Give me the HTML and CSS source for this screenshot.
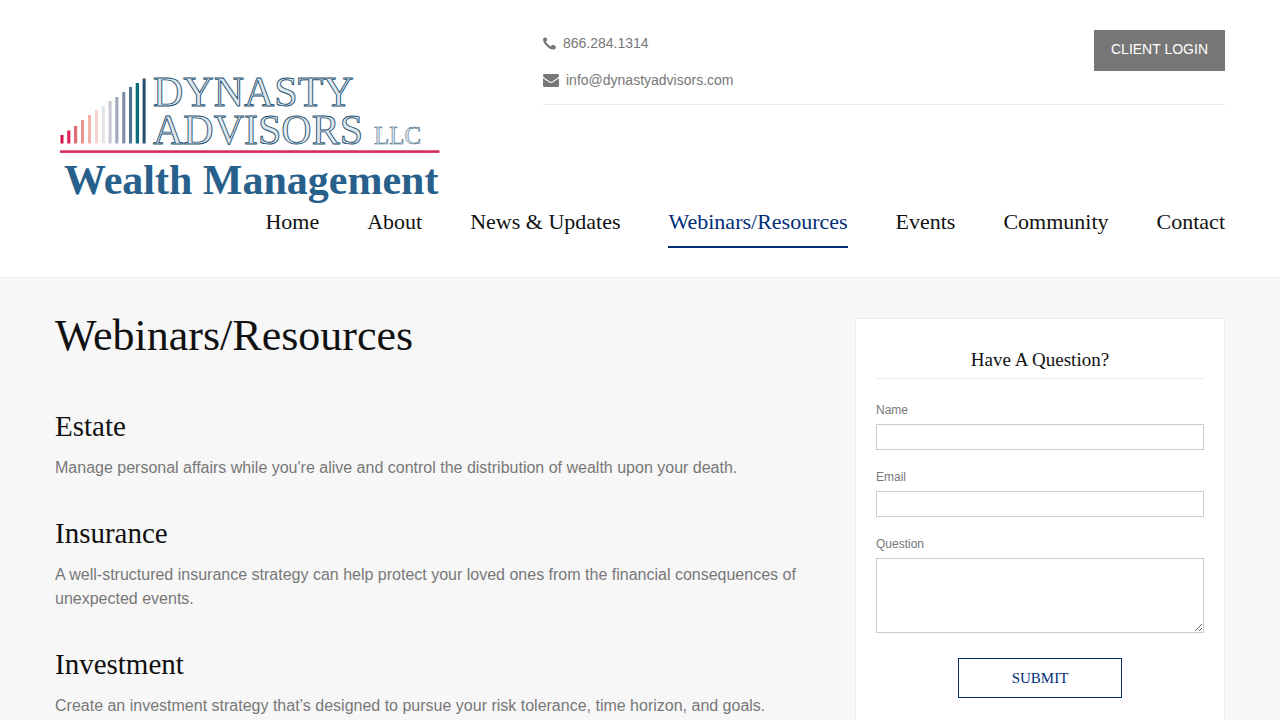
FILE: index.html
```html
<!DOCTYPE html>
<html lang="en">
<head>
    <meta charset="utf-8">
    <meta name="viewport" content="width=device-width, initial-scale=1">
    <title>Webinars/Resources | Dynasty Advisors</title>
    <link rel="stylesheet" href="styles.css">
</head>
<body>
    <header class="site-header">
        <div class="container">
            <div class="header-top">
                <a href="#" class="logo">
                    <svg width="390" height="140" viewBox="55 65 390 140" role="img" aria-label="Dynasty Advisors LLC Wealth Management">
                        <!-- Bars -->
                        <g>
                            <rect x="60.5" y="135" width="3" height="8.5" fill="#d0134b"/>
                            <rect x="67.2" y="130.5" width="3.2" height="13" fill="#dc2458"/>
                            <rect x="74" y="126" width="3.2" height="17.5" fill="#e06d75"/>
                            <rect x="81" y="120" width="3" height="23.5" fill="#ea9490"/>
                            <rect x="88" y="115" width="3" height="28.5" fill="#f1b3aa"/>
                            <rect x="95" y="110" width="3" height="33.5" fill="#f7d5ce"/>
                            <rect x="101.8" y="106" width="3" height="37.5" fill="#e3e3e9"/>
                            <rect x="108.6" y="101" width="3" height="42.5" fill="#c6c8d2"/>
                            <rect x="115.3" y="97" width="3.1" height="46.5" fill="#a3a9bc"/>
                            <rect x="122.2" y="92" width="3.1" height="51.5" fill="#7f8ca5"/>
                            <rect x="129" y="87" width="3.1" height="56.5" fill="#4c7793"/>
                            <rect x="135.7" y="83" width="3.3" height="60.5" fill="#0c6b7c"/>
                            <rect x="142.6" y="78.5" width="3" height="65" fill="#234b6b"/>
                        </g>
                        <text class="logo-name" x="153" y="106">DYNASTY</text>
                        <text class="logo-name" x="153" y="144">ADVISORS</text>
                        <text class="logo-llc" x="374" y="144">LLC</text>
                        <rect x="60" y="150.3" width="379.5" height="2.6" fill="#d62a58"/>
                        <text class="logo-sub" x="64" y="194">Wealth Management</text>
                    </svg>
                </a>
                <div class="header-info">
                    <ul class="contact-list">
                        <li>
                            <svg width="13" height="14" viewBox="0 1 13 14" aria-hidden="true"><path fill="#777" d="M3.1 1.7 C2.7 1.4 0.6 1.7 0.2 2.7 C-0.5 6 3 10.4 6.5 12.4 C8.6 13.6 11 14 12.1 12.9 C12.8 12.2 13.1 10.8 12.8 10.4 C12.2 9.8 10.1 8.8 9.5 8.8 C8.8 8.9 8.3 10.2 7.7 10.3 C6.8 10.2 3.2 7 3 5.8 C3 5.1 4.5 4.7 4.4 4 C4.3 3.2 3.5 2 3.1 1.7Z"/></svg>
                            <a href="tel:866.284.1314">866.284.1314</a>
                        </li>
                        <li>
                            <svg width="16" height="13" viewBox="0 0 16 13" aria-hidden="true"><path fill="#777" d="M1.4 0 H14.6 Q16 0 16 1.3 Q16 2.8 14.4 4 L9.6 7.3 Q8 8.3 6.4 7.3 L1.6 4 Q0 2.8 0 1.3 Q0 0 1.4 0Z M0 4.2 L6 8.3 Q8 9.5 10 8.3 L16 4.2 V11.5 Q16 13 14.5 13 H1.5 Q0 13 0 11.5Z"/></svg>
                            <a href="mailto:info@dynastyadvisors.com">info@dynastyadvisors.com</a>
                        </li>
                    </ul>
                    <a href="#" class="login-btn">CLIENT LOGIN</a>
                </div>
            </div>
            <nav class="main-nav">
                <a href="#">Home</a>
                <a href="#">About</a>
                <a href="#">News &amp; Updates</a>
                <a href="#" class="active">Webinars/Resources</a>
                <a href="#">Events</a>
                <a href="#">Community</a>
                <a href="#">Contact</a>
            </nav>
        </div>
    </header>

    <main class="container page">
        <div class="content">
            <h1>Webinars/Resources</h1>
            <section>
                <h2>Estate</h2>
                <p>Manage personal affairs while you're alive and control the distribution of wealth upon your death.</p>
            </section>
            <section>
                <h2>Insurance</h2>
                <p>A well-structured insurance strategy can help protect your loved ones from the financial consequences of unexpected events.</p>
            </section>
            <section>
                <h2>Investment</h2>
                <p>Create an investment strategy that’s designed to pursue your risk tolerance, time horizon, and goals.</p>
            </section>
        </div>

        <aside class="sidebar">
            <h3>Have A Question?</h3>
            <form>
                <div class="field">
                    <label for="name">Name</label>
                    <input type="text" id="name">
                </div>
                <div class="field">
                    <label for="email">Email</label>
                    <input type="email" id="email">
                </div>
                <div class="field">
                    <label for="question">Question</label>
                    <textarea id="question"></textarea>
                </div>
                <button type="submit">SUBMIT</button>
            </form>
        </aside>
    </main>
</body>
</html>
```
FILE: styles.css
```css
* {
    box-sizing: border-box;
}

body {
    margin: 0;
    background: #f7f7f7;
    color: #777;
    font-family: "Liberation Sans", Arial, sans-serif;
    font-size: 16px;
    line-height: 24px;
}

a {
    color: inherit;
    text-decoration: none;
}

h1, h2, h3 {
    margin: 0;
    color: #111;
    font-family: "Liberation Serif", "Times New Roman", serif;
    font-weight: 400;
}

.container {
    max-width: 1170px;
    margin: 0 auto;
}

/* Header */
.site-header {
    background: #fff;
    border-bottom: 1px solid #ebebeb;
    padding: 30px 0 29px;
}

.header-top {
    display: flex;
    justify-content: space-between;
    align-items: flex-start;
}

.logo {
    padding-top: 35px;
}

.logo svg {
    display: block;
}

.logo-name, .logo-llc {
    font-family: "Liberation Serif", "Times New Roman", serif;
    fill: #dfe9f0;
    stroke: #24506f;
    stroke-width: 0.9;
}

.logo-name {
    font-size: 42px;
}

.logo-llc {
    font-size: 25px;
    stroke-width: 0.5;
}

.logo-sub {
    font-family: "Liberation Serif", "Times New Roman", serif;
    font-size: 42px;
    font-weight: 700;
    fill: #28608c;
}

.header-info {
    display: flex;
    justify-content: space-between;
    align-items: flex-start;
    width: 682px;
    padding-bottom: 10px;
    border-bottom: 1px solid #ebebeb;
    font-size: 14px;
}

.contact-list {
    display: flex;
    flex-direction: column;
    gap: 10px;
    margin: 0;
    padding: 0;
    list-style: none;
    line-height: 27px;
}

.contact-list li {
    display: flex;
    align-items: center;
    gap: 7px;
}

.login-btn {
    padding: 7px 17px 10px;
    background: #777;
    color: #fff;
}

.main-nav {
    display: flex;
    justify-content: flex-end;
    gap: 48px;
    color: #111;
    font-family: "Liberation Serif", "Times New Roman", serif;
    font-size: 22px;
    line-height: 33px;
}

.main-nav a {
    padding-bottom: 8px;
    border-bottom: 2px solid transparent;
}

.main-nav .active {
    color: #022d78;
    border-color: #022d6e;
}

/* Page */
.page {
    display: flex;
    justify-content: space-between;
    align-items: flex-start;
    padding: 40px 0;
}

.content {
    flex: 1;
    max-width: 770px;
}

.content h1 {
    padding-bottom: 19px;
    font-size: 44px;
    line-height: 36px;
}

.content section {
    padding-top: 35px;
}

.content h2 {
    margin-bottom: 12px;
    font-size: 29px;
    line-height: 36px;
}

.content p {
    margin: 0;
}

/* Question form */
.sidebar {
    width: 370px;
    padding: 26px 20px 40px;
    background: #fff;
    border: 1px solid #ebebeb;
    border-radius: 2px;
}

.sidebar h3 {
    margin-bottom: 22px;
    padding-bottom: 3px;
    border-bottom: 1px solid #ebebeb;
    font-size: 19px;
    line-height: 30px;
    text-align: center;
}

.field {
    margin-bottom: 18px;
    font-size: 12px;
    line-height: 18px;
}

.field label {
    display: block;
    margin-bottom: 5px;
}

.field input, .field textarea {
    display: block;
    width: 100%;
    height: 26px;
    border: 1px solid #ccc;
    background: #fff;
}

.field textarea {
    height: 75px;
    resize: vertical;
}

.sidebar button {
    display: block;
    width: 50%;
    height: 40px;
    margin: 25px auto 0;
    border: 1px solid #022d6e;
    background: #fff;
    color: #022d78;
    font-family: "Liberation Serif", "Times New Roman", serif;
    font-size: 15px;
}
```
